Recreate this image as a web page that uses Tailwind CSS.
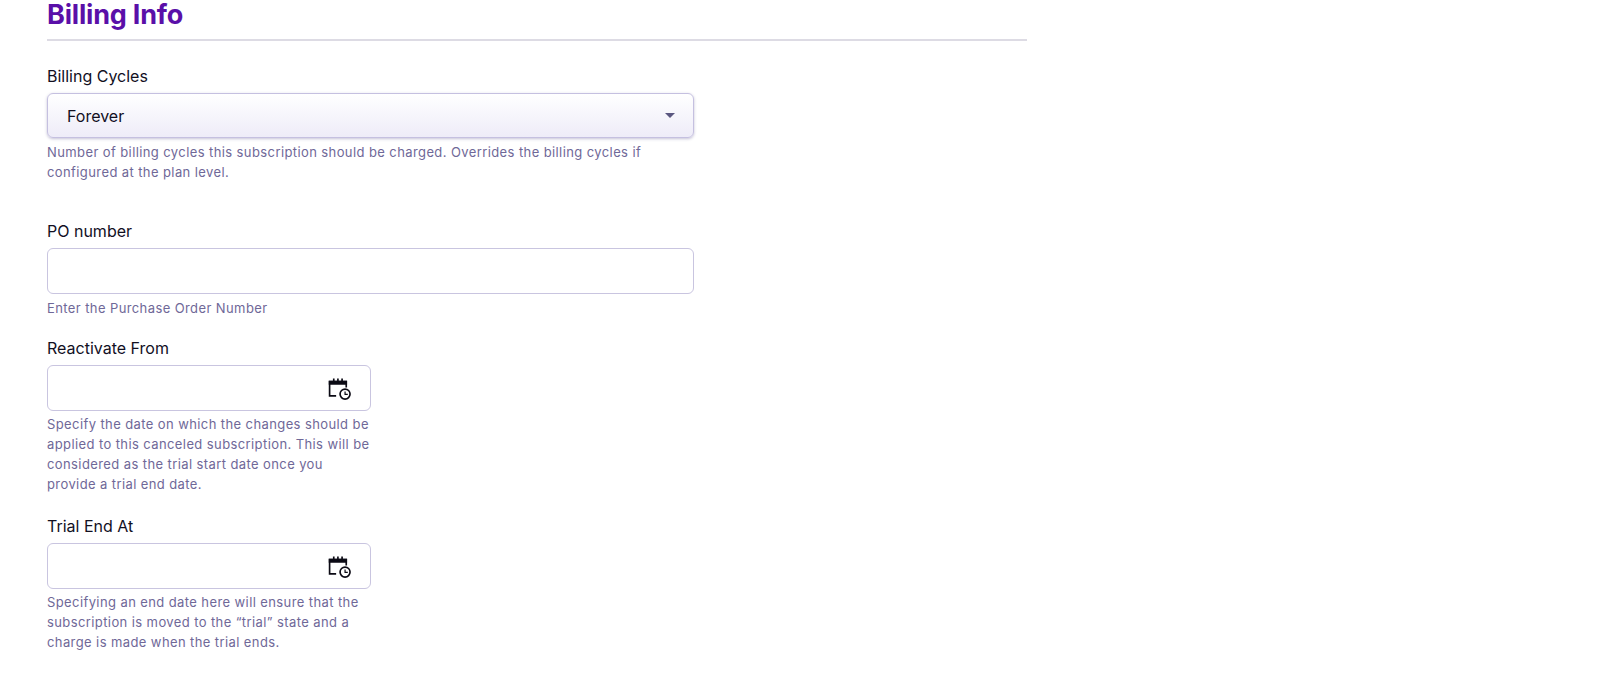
<!DOCTYPE html>
<html>
<head>
<meta charset="utf-8">
<script src="https://cdn.jsdelivr.net/npm/@tailwindcss/browser@4"></script>
<title>Billing Info</title>
</head>
<body class="bg-white font-['Inter',sans-serif] text-[#12101f]">
<div class="h-[688px] overflow-hidden pl-[47px]">
  <div class="w-[980px] h-[41px] border-b-2 border-[#dddbe4]">
    <h1 class="text-[27px] leading-[29px] font-bold tracking-[-0.2px] text-[#5a0fa8]">Billing Info</h1>
  </div>

  <div class="w-[647px] mt-[25px]">
    <label class="block text-base leading-5 mb-[7px]">Billing Cycles</label>
    <div class="h-[45px] flex items-center justify-between pl-[19px] pr-[18px] rounded-md border border-[#c5c0e0] bg-gradient-to-b from-white to-[#eeecf8] shadow-[0_1px_3px_rgba(60,50,120,0.3)]">
      <span class="text-base">Forever</span>
      <span class="w-0 h-0 border-x-[5px] border-x-transparent border-t-[5px] border-t-[#5b5780]"></span>
    </div>
    <p class="mt-[4px] text-[13px] leading-5 tracking-[0.4px] text-[#6f6898]">Number of billing cycles this subscription should be charged. Overrides the billing cycles if configured at the plan level.</p>
  </div>

  <div class="w-[647px] mt-[39px]">
    <label class="block text-base leading-5 mb-[7px]">PO number</label>
    <div class="h-[46px] rounded-md border border-[#c9c5e0]"></div>
    <p class="mt-[4px] text-[13px] leading-5 tracking-[0.4px] text-[#6f6898]">Enter the Purchase Order Number</p>
  </div>

  <div class="w-[324px] mt-[20px]">
    <label class="block text-base leading-5 mb-[7px]">Reactivate From</label>
    <div class="h-[46px] flex items-center justify-end pr-[18px] rounded-md border border-[#c9c5e0]">
      <svg class="mt-[2px]" width="24" height="22" viewBox="2.5 2.5 19.5 18.5" fill="none" stroke="#0b0a14" stroke-width="1.4">
        <path d="M9 17.5H3.5V5.5H17.5V10.5"/>
        <path d="M3.5 5.5H17.5V7.5H3.5Z" fill="#0b0a14"/>
        <path d="M7 3V6M10.5 3V6M14 3V6"/>
        <circle cx="16.5" cy="16" r="4.2"/>
        <path d="M16.5 13.8V16.2H18.8" stroke-width="1"/>
      </svg>
    </div>
    <p class="mt-[3px] text-[13px] leading-5 tracking-[0.4px] text-[#6f6898]">Specify the date on which the changes should be applied to this canceled subscription. This will be considered as the trial start date once you provide a trial end date.</p>
  </div>

  <div class="w-[324px] mt-[22px]">
    <label class="block text-base leading-5 mb-[7px]">Trial End At</label>
    <div class="h-[46px] flex items-center justify-end pr-[18px] rounded-md border border-[#c9c5e0]">
      <svg class="mt-[2px]" width="24" height="22" viewBox="2.5 2.5 19.5 18.5" fill="none" stroke="#0b0a14" stroke-width="1.4">
        <path d="M9 17.5H3.5V5.5H17.5V10.5"/>
        <path d="M3.5 5.5H17.5V7.5H3.5Z" fill="#0b0a14"/>
        <path d="M7 3V6M10.5 3V6M14 3V6"/>
        <circle cx="16.5" cy="16" r="4.2"/>
        <path d="M16.5 13.8V16.2H18.8" stroke-width="1"/>
      </svg>
    </div>
    <p class="mt-[3px] text-[13px] leading-5 tracking-[0.4px] text-[#6f6898]">Specifying an end date here will ensure that the subscription is moved to the “trial” state and a charge is made when the trial ends.</p>
  </div>
</div>
</body>
</html>
